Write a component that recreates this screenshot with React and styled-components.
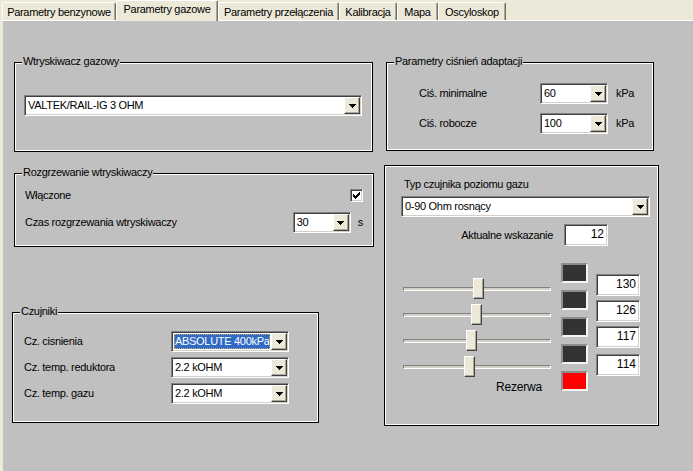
import React from 'react';
import styled, { createGlobalStyle, css } from 'styled-components';

const GlobalStyle = createGlobalStyle`
  html, body { margin: 0; padding: 0; }
  body {
    font-family: "Liberation Sans", Arial, sans-serif;
    font-size: 11px;
    letter-spacing: -0.3px;
    color: #000;
    background: #ece9d8;
  }
  * { box-sizing: border-box; }
`;

const Window = styled.div`
  width: 693px;
  height: 471px;
  overflow: hidden;
  display: flex;
  flex-direction: column;
  background: #ece9d8;
`;

const TabStrip = styled.div`
  display: flex;
  align-items: flex-end;
  height: 21px;
  flex-shrink: 0;
  padding-left: 2px;
  box-shadow: inset 0 -1px #fff;
`;

const Tab = styled.div`
  position: relative;
  width: ${(p) => p.$w}px;
  height: ${(p) => (p.$active ? 21 : 18)}px;
  margin-bottom: ${(p) => (p.$active ? 0 : 1)}px;
  z-index: ${(p) => (p.$active ? 1 : 0)};
  padding-top: ${(p) => (p.$active ? 2 : 3)}px;
  display: flex;
  justify-content: center;
  line-height: 13px;
  white-space: nowrap;
  background: #ece9d8;
  border-top: 1px solid #fff;
  border-left: 1px solid #fff;
  border-right: 1px solid #716f64;
  box-shadow: inset -1px 0 #aca899;
  border-radius: 2px 2px 0 0;
`;

const Panel = styled.div`
  flex: 1;
  margin-left: 3px;
  padding-left: 9px;
  background: #c0c0c0;
  display: flex;
  align-items: flex-start;
`;

const Column = styled.div`
  display: flex;
  flex-direction: column;
  align-items: flex-start;
  width: ${(p) => p.$w}px;
  margin-left: ${(p) => p.$ml || 0}px;
`;

const Frame = styled.div`
  position: relative;
  width: ${(p) => p.$w}px;
  height: ${(p) => p.$h}px;
  margin: ${(p) => p.$mt}px 0 0 ${(p) => p.$ml || 0}px;
  border: 1px solid #000;
  box-shadow: inset 1px 1px #fff, inset -1px -1px #fff;
  display: flex;
  flex-direction: column;
  align-items: flex-start;
`;

const Legend = styled.span`
  position: absolute;
  top: -8px;
  left: 7px;
  padding: 0 1px;
  line-height: 13px;
  background: #c0c0c0;
  white-space: nowrap;
`;

const InjectorFrame = styled(Frame)`
  padding: 32px 0 0 9px;
`;

const PressureFrame = styled(Frame)`
  padding: 20px 0 0 32px;
  gap: 9px;
`;

const WarmupFrame = styled(Frame)`
  padding: 15px 10px 0 10px;
  align-items: stretch;
`;

const SensorsFrame = styled(Frame)`
  padding: 18px 0 0 11px;
  gap: 5px;
`;

const LevelFrame = styled(Frame)`
  padding: 12px 0 0 0;
  align-items: stretch;
`;

const Row = styled.div`
  display: flex;
  align-items: center;
  height: ${(p) => p.$h || 21}px;
  margin-top: ${(p) => p.$mt || 0}px;
`;

const Label = styled.span`
  display: inline-block;
  width: ${(p) => (p.$w ? `${p.$w}px` : 'auto')};
  flex: ${(p) => (p.$grow ? 1 : 'none')};
  margin-left: ${(p) => p.$ml || 0}px;
  line-height: 13px;
  white-space: nowrap;
`;

const Unit = styled.span`
  margin-left: ${(p) => p.$ml}px;
  line-height: 13px;
`;

const sunken = css`
  border: 1px solid;
  border-color: #808080 #fff #fff #808080;
  box-shadow: inset 1px 1px #404040, inset -1px -1px #d4d0c8;
`;

const ComboBox = styled.div`
  ${sunken};
  width: ${(p) => p.$w}px;
  height: 21px;
  flex-shrink: 0;
  margin-left: ${(p) => p.$ml || 0}px;
  padding: 1px;
  display: flex;
  background: #fff;
`;

const ComboText = styled.div`
  flex: 1;
  min-width: 0;
  overflow: hidden;
  white-space: nowrap;
  line-height: 17px;
  padding-left: 2px;
  ${(p) =>
    p.$selected &&
    css`
      margin: 1px;
      line-height: 15px;
      padding-left: 1px;
      background: #316ac5;
      color: #fff;
      outline: 1px dotted #c8b060;
      outline-offset: -1px;
    `}
`;

const DropButton = styled.div`
  width: 16px;
  flex-shrink: 0;
  display: flex;
  align-items: center;
  justify-content: center;
  background: #ece9d8;
  border: 1px solid;
  border-color: #fff #404040 #404040 #fff;
  box-shadow: inset -1px -1px #aca899;
`;

const Arrow = () => (
  <svg width="7" height="4" viewBox="0 0 7 4" shapeRendering="crispEdges">
    <path d="M0 0h7v1h-1v1h-1v1h-1v1h-1v-1h-1v-1h-1v-1h-1z" fill="#000" />
  </svg>
);

const Combo = ({ w, value, selected, ml }) => (
  <ComboBox $w={w} $ml={ml}>
    <ComboText $selected={selected}>{value}</ComboText>
    <DropButton>
      <Arrow />
    </DropButton>
  </ComboBox>
);

const EditBox = styled.div`
  ${sunken};
  width: 44px;
  height: 22px;
  flex-shrink: 0;
  margin-top: ${(p) => p.$mt || 0}px;
  background: #fff;
  text-align: right;
  padding-right: 3px;
  line-height: 19px;
  font-size: 12px;
  letter-spacing: 0;
`;

const CheckBox = styled.div`
  ${sunken};
  width: 13px;
  height: 13px;
  background: #fff;
  display: flex;
  align-items: center;
  justify-content: center;
`;

const LevelRow = styled.div`
  display: flex;
  align-items: center;
  justify-content: flex-end;
  gap: 11px;
  height: 22px;
  padding-right: 50px;
  margin-top: ${(p) => p.$mt || 0}px;
`;

const GaugeArea = styled.div`
  display: flex;
  align-items: flex-start;
  padding-left: 18px;
  margin-top: 17px;
`;

const SliderColumn = styled.div`
  width: 148px;
  margin-top: 13px;
  display: flex;
  flex-direction: column;
`;

const SliderRow = styled.div`
  position: relative;
  height: 26px;
`;

const Track = styled.div`
  position: absolute;
  left: 0;
  right: 0;
  top: 11px;
  height: 4px;
  border: 1px solid;
  border-color: #808080 #fff #fff #808080;
  background: #d4d0c8;
`;

const Thumb = styled.div`
  position: absolute;
  top: 2px;
  width: 11px;
  height: 21px;
  background: #ece9d8;
  border: 1px solid;
  border-color: #fff #404040 #404040 #fff;
  box-shadow: inset -1px -1px #aca899;
`;

const Reserve = styled.span`
  margin: 1px 0 0 93px;
  line-height: 13px;
  font-size: 12px;
  letter-spacing: -0.2px;
`;

const IndicatorColumn = styled.div`
  display: flex;
  flex-direction: column;
  gap: 7px;
  margin-left: 10px;
`;

const Indicator = styled.div`
  width: 27px;
  height: 20px;
  border: 2px solid;
  border-color: #8c8c8c #f4f4f0 #f4f4f0 #8c8c8c;
  background: ${(p) => p.$color};
`;

const ValueColumn = styled.div`
  display: flex;
  flex-direction: column;
  gap: 4px;
  margin: 11px 0 0 8px;
`;

const tabs = [
  { label: 'Parametry benzynowe', w: 114 },
  { label: 'Parametry gazowe', w: 102, active: true },
  { label: 'Parametry przełączenia', w: 121 },
  { label: 'Kalibracja', w: 58 },
  { label: 'Mapa', w: 41 },
  { label: 'Oscyloskop', w: 68 },
];

const levels = [130, 126, 117, 114];
const indicators = ['#333333', '#333333', '#333333', '#333333', '#ff0000'];

export default function App() {
  return (
    <>
      <GlobalStyle />
      <Window>
        <TabStrip>
          {tabs.map((t) => (
            <Tab key={t.label} $w={t.w} $active={t.active}>
              {t.label}
            </Tab>
          ))}
        </TabStrip>
        <Panel>
          <Column $w={362}>
            <InjectorFrame $w={359} $h={90} $mt={41} $ml={2}>
              <Legend>Wtryskiwacz gazowy</Legend>
              <Combo w={338} value="VALTEK/RAIL-IG 3 OHM" />
            </InjectorFrame>

            <WarmupFrame $w={360} $h={74} $mt={21} $ml={2}>
              <Legend>Rozgrzewanie wtryskiwaczy</Legend>
              <Row $h={13}>
                <Label $grow>Włączone</Label>
                <CheckBox>
                  <svg width="7" height="7" viewBox="0 0 7 7" shapeRendering="crispEdges">
                    <path d="M6 0h1v3h-1v1h-1v1h-1v1h-1v1h-1v-1h-1v-1h-1v-3h1v1h1v1h1v-1h1v-1h1z" fill="#000" />
                  </svg>
                </CheckBox>
              </Row>
              <Row $mt={10}>
                <Label $grow>Czas rozgrzewania wtryskiwaczy</Label>
                <Combo w={58} value="30" />
                <Unit $ml={7}>s</Unit>
              </Row>
            </WarmupFrame>

            <SensorsFrame $w={307} $h={111} $mt={65}>
              <Legend>Czujniki</Legend>
              <Row>
                <Label $w={147}>Cz. cisnienia</Label>
                <Combo w={118} value="ABSOLUTE 400kPa" selected />
              </Row>
              <Row>
                <Label $w={147}>Cz. temp. reduktora</Label>
                <Combo w={118} value="2.2 kOHM" />
              </Row>
              <Row>
                <Label $w={147}>Cz. temp. gazu</Label>
                <Combo w={118} value="2.2 kOHM" />
              </Row>
            </SensorsFrame>
          </Column>

          <Column $w={276} $ml={10}>
            <PressureFrame $w={268} $h={89} $mt={41} $ml={2}>
              <Legend>Parametry ciśnień adaptacji</Legend>
              <Row>
                <Label $w={121}>Ciś. minimalne</Label>
                <Combo w={68} value="60" />
                <Unit $ml={8}>kPa</Unit>
              </Row>
              <Row>
                <Label $w={121}>Ciś. robocze</Label>
                <Combo w={68} value="100" />
                <Unit $ml={8}>kPa</Unit>
              </Row>
            </PressureFrame>

            <LevelFrame $w={275} $h={261} $mt={14}>
              <Label $ml={19}>Typ czujnika poziomu gazu</Label>
              <Row $mt={5}>
                <Combo w={249} ml={16} value="0-90 Ohm rosnący" />
              </Row>
              <LevelRow $mt={7}>
                <Label>Aktualne wskazanie</Label>
                <EditBox>12</EditBox>
              </LevelRow>
              <GaugeArea>
                <SliderColumn>
                  {levels.map((v, i) => (
                    <SliderRow key={i}>
                      <Track />
                      <Thumb style={{ left: Math.round((v / 255) * 137) }} />
                    </SliderRow>
                  ))}
                  <Reserve>Rezerwa</Reserve>
                </SliderColumn>
                <IndicatorColumn>
                  {indicators.map((c, i) => (
                    <Indicator key={i} $color={c} />
                  ))}
                </IndicatorColumn>
                <ValueColumn>
                  {levels.map((v, i) => (
                    <EditBox key={i} $mt={i === 3 ? 2 : 0}>
                      {v}
                    </EditBox>
                  ))}
                </ValueColumn>
              </GaugeArea>
            </LevelFrame>
          </Column>
        </Panel>
      </Window>
    </>
  );
}
